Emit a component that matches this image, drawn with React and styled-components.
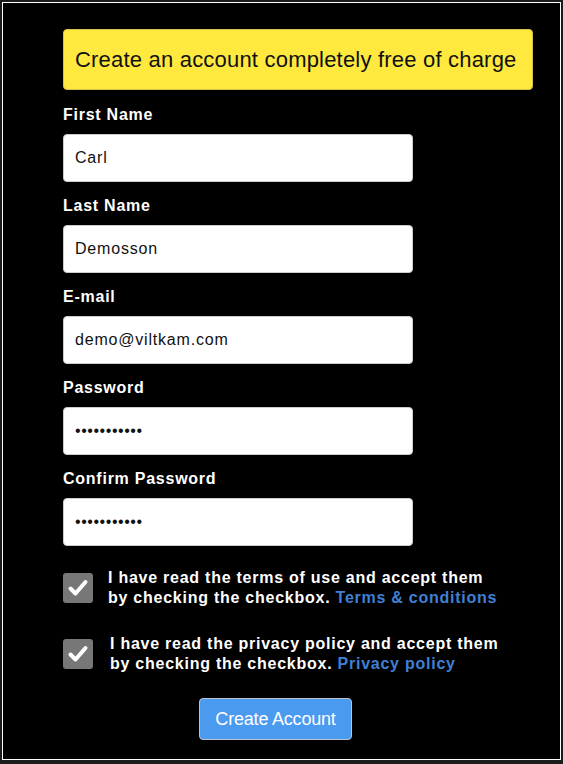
import styled, { createGlobalStyle } from "styled-components";

const GlobalStyle = createGlobalStyle`
  html, body {
    margin: 0;
    padding: 0;
    background: #1c1c1c;
    font-family: "Liberation Sans", Arial, sans-serif;
  }
`;

const Frame = styled.div`
  margin: 2px;
  height: 758px;
  border: 1px solid #fff;
  background: #000;
  box-sizing: border-box;
  padding: 26px 0 0 60px;
`;

const Banner = styled.div`
  width: 470px;
  height: 61px;
  box-sizing: border-box;
  background: #ffe93f;
  border: 1px solid #d6c34a;
  border-radius: 4px;
  color: #111;
  font-size: 22px;
  letter-spacing: 0.2px;
  display: flex;
  align-items: center;
  padding-left: 11px;
  margin-bottom: 15px;
`;

const Field = styled.div`
  margin-bottom: 14px;
`;

const Label = styled.label`
  display: block;
  color: #fff;
  font-weight: bold;
  font-size: 16px;
  letter-spacing: 0.75px;
  line-height: 20px;
  margin-bottom: 9px;
`;

const Input = styled.input`
  display: block;
  width: 350px;
  height: 48px;
  box-sizing: border-box;
  border: 1px solid #ccc;
  border-radius: 4px;
  background: #fff;
  padding: 0 11px;
  font-family: "Liberation Sans", Arial, sans-serif;
  font-size: 16px;
  letter-spacing: ${(p) => (p.$masked ? "0.55px" : "0.8px")};
  color: #111;
  outline: none;
`;

const CheckRow = styled.div`
  display: flex;
  align-items: center;
  margin-top: ${(p) => p.$top}px;
`;

const Box = styled.span`
  width: 30px;
  height: 30px;
  flex: none;
  background: #777;
  border-radius: 3px;
  display: flex;
  align-items: center;
  justify-content: center;
`;

const CheckText = styled.p`
  margin: 0 0 0 ${(p) => p.$indent}px;
  color: #fff;
  font-weight: bold;
  font-size: 16px;
  letter-spacing: 0.75px;
  line-height: 20px;
`;

const Link = styled.a`
  color: #3f80d6;
  text-decoration: none;
`;

const Button = styled.button`
  display: block;
  margin: 24px 0 0 136px;
  width: 153px;
  height: 42px;
  background: #4a9af0;
  border: 1px solid #b9c4cf;
  border-radius: 4px;
  color: #fff;
  font-family: "Liberation Sans", Arial, sans-serif;
  font-size: 18px;
  letter-spacing: -0.2px;
`;

const Check = () => (
  <svg width="22" height="22" viewBox="0 0 22 22">
    <path
      d="M3.5 11.5 L8.5 16.5 L18.5 5"
      fill="none"
      stroke="#fff"
      strokeWidth="4"
      strokeLinecap="round"
      strokeLinejoin="round"
    />
  </svg>
);

const fields = [
  { label: "First Name", value: "Carl" },
  { label: "Last Name", value: "Demosson" },
  { label: "E-mail", value: "demo@viltkam.com" },
  { label: "Password", value: "•••••••••••", masked: true },
  { label: "Confirm Password", value: "•••••••••••", masked: true },
];

export default function App() {
  return (
    <>
      <GlobalStyle />
      <Frame>
        <Banner>Create an account completely free of charge</Banner>
        {fields.map((f) => (
          <Field key={f.label}>
            <Label>{f.label}</Label>
            <Input $masked={f.masked} defaultValue={f.value} readOnly />
          </Field>
        ))}
        <CheckRow $top={22}>
          <Box>
            <Check />
          </Box>
          <CheckText $indent={15}>
            I have read the terms of use and accept them
            <br />
            by checking the checkbox. <Link href="#">Terms &amp; conditions</Link>
          </CheckText>
        </CheckRow>
        <CheckRow $top={26}>
          <Box>
            <Check />
          </Box>
          <CheckText $indent={17}>
            I have read the privacy policy and accept them
            <br />
            by checking the checkbox. <Link href="#">Privacy policy</Link>
          </CheckText>
        </CheckRow>
        <Button>Create Account</Button>
      </Frame>
    </>
  );
}
